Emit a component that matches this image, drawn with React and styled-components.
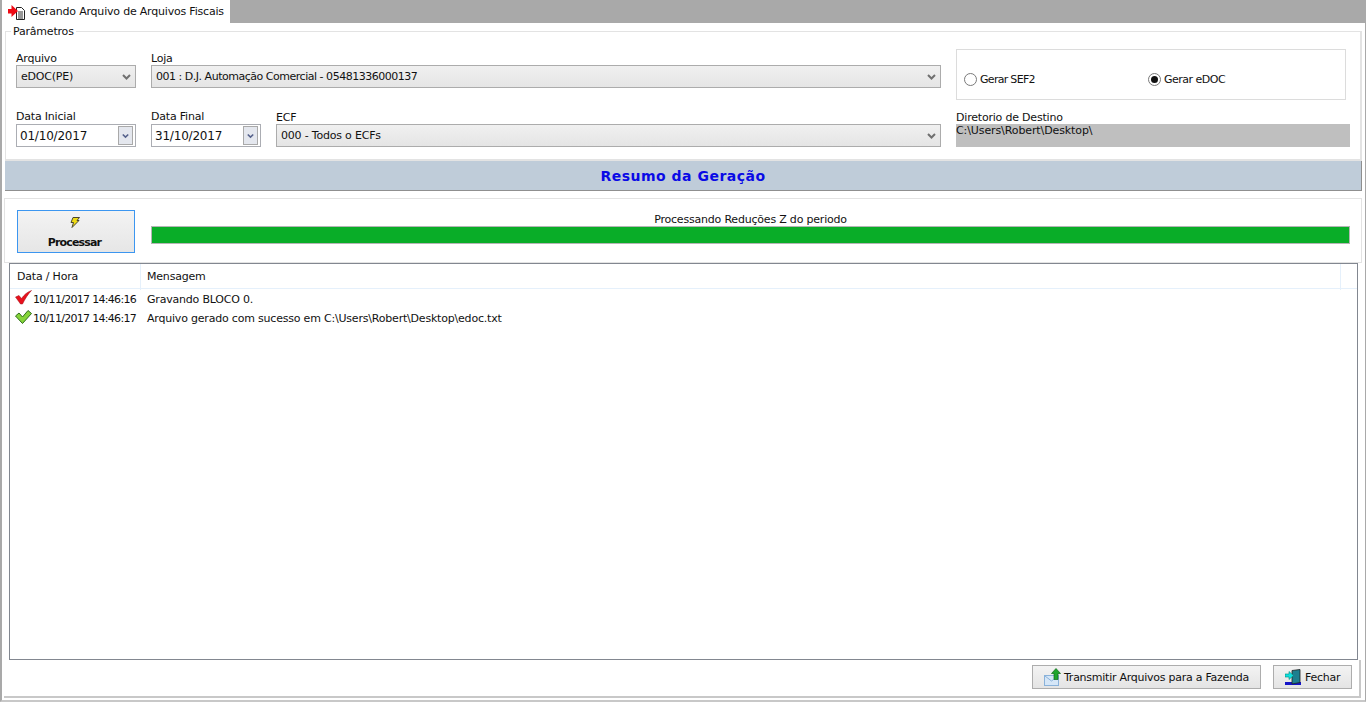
import React from 'react';
import styled, { createGlobalStyle } from 'styled-components';

const GlobalStyle = createGlobalStyle`
  html, body { margin: 0; padding: 0; background: #fff; }
  body { font-family: "DejaVu Sans", "Liberation Sans", sans-serif; font-size: 11px; color: #111; }
  * { box-sizing: border-box; }
`;

const Page = styled.div`
  width: 1366px;
  height: 702px;
  overflow: hidden;
  display: flex;
  flex-direction: column;
  border-left: 2px solid #a9a9a9;
  border-right: 1px solid #a9a9a9;
  border-bottom: 2px solid #c8c8c8;
  background: #fff;
`;

const TabBar = styled.div`
  height: 23px;
  flex: none;
  background: #a9a9a9;
  display: flex;
`;

const Tab = styled.div`
  width: 228px;
  background: #fff;
  display: flex;
  align-items: center;
  gap: 4px;
  padding-left: 6px;
  letter-spacing: -0.2px;
`;

const Body = styled.div`
  flex: 1;
  min-height: 0;
  display: flex;
  flex-direction: column;
  padding: 2px 3px 0 2px;
`;

const Params = styled.fieldset`
  margin: 0 0 0 1px;
  padding: 11px 10px 0 10px;
  height: 136px;
  flex: none;
  border: 2px solid #e3e3e3;
  border-width: 1px 2px 2px 1px;
  display: grid;
  grid-template-columns: 120px 110px 125px 1fr 394px;
  grid-template-rows: 51px 47px;
  column-gap: 15px;
  position: relative;
`;

const Legend = styled.legend`
  padding: 0 2px;
  margin-left: -5px;
  line-height: 13px;
  letter-spacing: -0.2px;
`;

const Field = styled.div`
  display: flex;
  flex-direction: column;
  justify-content: ${p => (p.$top ? 'flex-start' : 'flex-end')};
  padding-top: ${p => (p.$top ? 3 : 0)}px;
  grid-column: ${p => p.$col};
  min-width: 0;
`;

const Label = styled.label`
  line-height: 13px;
  margin-bottom: ${p => p.$gap ?? 0}px;
  letter-spacing: -0.2px;
`;

const Select = styled.div`
  height: 23px;
  border: 1px solid #acacac;
  background: linear-gradient(#f0f0f0, #e5e5e5);
  display: flex;
  align-items: center;
  justify-content: space-between;
  padding: 0 4px 0 4px;
  letter-spacing: ${p => p.$spacing ?? -0.2}px;
`;

const DateBox = styled.div`
  height: 23px;
  border: 1px solid #abadb3;
  background: #fff;
  display: flex;
  align-items: center;
  justify-content: space-between;
  padding: 0 2px 0 3px;
  font-size: 12px;
  letter-spacing: -0.2px;
`;

const DateButton = styled.div`
  width: 15px;
  height: 19px;
  border: 1px solid #a9a9a9;
  background: #e4e7ee;
  display: flex;
  align-items: center;
  justify-content: center;
`;

const RadioBox = styled.div`
  grid-column: 5;
  width: 390px;
  height: 51px;
  border: 1px solid #dcdcdc;
  display: grid;
  grid-template-columns: 184px 1fr;
  align-items: center;
  padding: 9px 0 0 7px;
`;

const RadioOption = styled.div`
  display: flex;
  align-items: center;
  gap: 3px;
  letter-spacing: ${p => p.$spacing}px;
`;

const RadioCircle = styled.span`
  width: 13px;
  height: 13px;
  border-radius: 50%;
  border: 1px solid #7a7a7a;
  background: #fff;
  display: flex;
  align-items: center;
  justify-content: center;
  &::after {
    content: '';
    width: 7px;
    height: 7px;
    border-radius: 50%;
    background: ${p => (p.$on ? '#111' : 'transparent')};
  }
`;

const PathField = styled.div`
  height: 23px;
  background: #bfbfbf;
  line-height: 14px;
  letter-spacing: -0.1px;
`;

const Band = styled.div`
  height: 30px;
  flex: none;
  margin-left: 1px;
  background: #bfccd9;
  border-bottom: 1px solid #8f8f8f;
  border-right: 1px solid #8f8f8f;
  display: flex;
  align-items: center;
  justify-content: center;
  font-size: 14px;
  font-weight: bold;
  color: #0a0ae6;
  letter-spacing: 0.5px;
`;

const ProcessPanel = styled.div`
  height: 65px;
  flex: none;
  margin-top: 7px;
  border: 1px solid #e3e3e3;
  display: flex;
  gap: 16px;
  padding: 11px 11px 0 12px;
`;

const ProcessButton = styled.button`
  width: 118px;
  height: 43px;
  padding: 6px 3px 0 0;
  border: 1px solid #3c96f0;
  background: linear-gradient(#f3f3f3, #e6e6e6);
  font: bold 11px "DejaVu Sans", sans-serif;
  color: #111;
  display: flex;
  flex-direction: column;
  align-items: center;
  gap: 8px;
  letter-spacing: -0.85px;
`;

const ProgressWrap = styled.div`
  flex: 1;
  display: flex;
  flex-direction: column;
  align-items: stretch;
  padding-top: 3px;
`;

const ProgressLabel = styled.div`
  text-align: center;
  line-height: 13px;
  letter-spacing: -0.2px;
`;

const ProgressBar = styled.div`
  height: 18px;
  border: 1px solid #b5b5b5;
  background: #09ad28;
`;

const ListView = styled.div`
  flex: none;
  height: 397px;
  margin: 0 4px 0 5px;
  border: 1px solid #828790;
  display: flex;
  flex-direction: column;
`;

const ListHead = styled.div`
  height: 25px;
  flex: none;
  display: grid;
  grid-template-columns: 131px 1200px 1fr;
  border-bottom: 1px solid #e5f0fb;
  background: #fff;
`;

const HeadCell = styled.div`
  border-right: 1px solid #e5f0fb;
  padding-left: ${p => p.$pad}px;
  line-height: 26px;
  letter-spacing: -0.2px;
`;

const Rows = styled.div`
  padding-top: 1px;
`;

const Row = styled.div`
  height: 19px;
  display: grid;
  grid-template-columns: 131px 1fr;
  align-items: center;
  letter-spacing: -0.2px;
`;

const StampCell = styled.div`
  display: flex;
  align-items: center;
  padding-left: 5px;
  gap: 1px;
  white-space: nowrap;
  letter-spacing: -0.7px;
  svg { flex: none; overflow: visible; }
`;

const MessageCell = styled.div`
  padding-left: 6px;
`;

const Footer = styled.div`
  flex: 1;
  margin: 0 1px 2px 0;
  border-right: 2px solid #c8c8c8;
  border-bottom: 2px solid #c8c8c8;
  display: flex;
  justify-content: flex-end;
  gap: 12px;
  padding: 5px 7px 0 0;
`;

const ActionButton = styled.button`
  width: ${p => p.$w}px;
  height: 24px;
  padding: 0 0 0 11px;
  border: 1px solid #adadad;
  background: linear-gradient(#f3f3f3, #e4e4e4);
  font: 11px "DejaVu Sans", sans-serif;
  color: #111;
  display: flex;
  align-items: center;
  gap: ${p => p.$gap}px;
  letter-spacing: -0.25px;
  svg { flex: none; }
`;

const Chevron = ({ color = '#707070', small }) => (
  <svg width={small ? 7 : 9} height="6" viewBox="0 0 9 6">
    <path d="M1 1l3.500 3.500L8 1" fill="none" stroke={color} strokeWidth="2" />
  </svg>
);

const TabIcon = () => (
  <svg width="18" height="16" viewBox="0 0 18 16">
    <path d="M8.500 3.500h5l3 3v9h-8z" fill="#fff" stroke="#222" />
    <path d="M10 8h5M10 10h5M10 12h5M10 14h5" stroke="#333" />
    <path d="M0 5h3.500V1L10 7l-6.500 6V9.500H0z" fill="#ee0a14" />
  </svg>
);

const Bolt = () => (
  <svg width="10" height="11" viewBox="0 0 10 11">
    <path d="M3 0.500h6.500L7 3.500h2L2 10.500l1.500-5H1z" fill="#efdc14" stroke="#4a4630" strokeWidth="1" />
  </svg>
);

const RedCheck = () => (
  <svg width="17" height="15" viewBox="0 2 17 15">
    <path d="M0.500 7L4 5.500l2.500 3C9 5 12 2 16.500 0.500 13 4 10 9 7.500 14H5.500z" fill="#e8101c" stroke="#9c0a12" strokeWidth=".5" />
  </svg>
);

const GreenCheck = () => (
  <svg width="17" height="15" viewBox="0 1 17 15">
    <path d="M0.500 6L4 3l3.500 4L13 0.500l3.500 3-9 10z" fill="#86d43a" stroke="#2f6f1c" strokeWidth="1" />
  </svg>
);

const MailIcon = () => (
  <svg width="18" height="18" viewBox="0 0 18 18">
    <rect x="0.500" y="7.500" width="14" height="10" fill="#d5e6f7" stroke="#8ab2da" />
    <path d="M1 8l6.500 5L14 8" fill="none" stroke="#8ab2da" />
    <path d="M12 0.500l4.500 5H14v6h-4v-6H7.500z" fill="#1fa52c" stroke="#0d6a18" strokeWidth=".7" />
  </svg>
);

const DoorIcon = () => (
  <svg width="16" height="16" viewBox="0 0 16 16">
    <path d="M0 13h16v3H0z" fill="#1414c8" />
    <path d="M7 1.500l8-1v13l-8 1.500z" fill="#1d7f8f" stroke="#222" strokeWidth=".8" />
    <path d="M0 5h4V2.500L8.500 6.500 4 10.500V8H0z" fill="#10e0e0" stroke="#087" strokeWidth=".6" />
  </svg>
);

const App = () => (
  <Page>
    <GlobalStyle />
    <TabBar>
      <Tab>
        <TabIcon />
        Gerando Arquivo de Arquivos Fiscais
      </Tab>
    </TabBar>
    <Body>
      <Params>
        <Legend>Parâmetros</Legend>
        <Field $col="1" $top>
          <Label>Arquivo</Label>
          <Select>eDOC(PE)<Chevron /></Select>
        </Field>
        <Field $col="2 / 5" $top>
          <Label>Loja</Label>
          <Select $spacing={-0.48}>001 : D.J. Automação Comercial - 05481336000137<Chevron /></Select>
        </Field>
        <RadioBox>
          <RadioOption $spacing={-0.7}><RadioCircle />Gerar SEF2</RadioOption>
          <RadioOption $spacing={-0.5}><RadioCircle $on />Gerar eDOC</RadioOption>
        </RadioBox>
        <Field $col="1">
          <Label $gap={1}>Data Inicial</Label>
          <DateBox>01/10/2017<DateButton><Chevron color="#56628c" small /></DateButton></DateBox>
        </Field>
        <Field $col="2">
          <Label $gap={1}>Data Final</Label>
          <DateBox>31/10/2017<DateButton><Chevron color="#56628c" small /></DateButton></DateBox>
        </Field>
        <Field $col="3 / 5">
          <Label>ECF</Label>
          <Select>000 - Todos o ECFs<Chevron /></Select>
        </Field>
        <Field $col="5">
          <Label>Diretorio de Destino</Label>
          <PathField>C:\Users\Robert\Desktop\</PathField>
        </Field>
      </Params>
      <Band>Resumo da Geração</Band>
      <ProcessPanel>
        <ProcessButton><Bolt />Processar</ProcessButton>
        <ProgressWrap>
          <ProgressLabel>Processando Reduções Z do periodo</ProgressLabel>
          <ProgressBar />
        </ProgressWrap>
      </ProcessPanel>
      <ListView>
        <ListHead>
          <HeadCell $pad={7}>Data / Hora</HeadCell>
          <HeadCell $pad={6}>Mensagem</HeadCell>
        </ListHead>
        <Rows>
          <Row>
            <StampCell><RedCheck />10/11/2017 14:46:16</StampCell>
            <MessageCell>Gravando BLOCO 0.</MessageCell>
          </Row>
          <Row>
            <StampCell><GreenCheck />10/11/2017 14:46:17</StampCell>
            <MessageCell>Arquivo gerado com sucesso em C:\Users\Robert\Desktop\edoc.txt</MessageCell>
          </Row>
        </Rows>
      </ListView>
      <Footer>
        <ActionButton $w={229} $gap={2}><MailIcon />Transmitir Arquivos para a Fazenda</ActionButton>
        <ActionButton $w={79} $gap={4}><DoorIcon />Fechar</ActionButton>
      </Footer>
    </Body>
  </Page>
);

export default App;
